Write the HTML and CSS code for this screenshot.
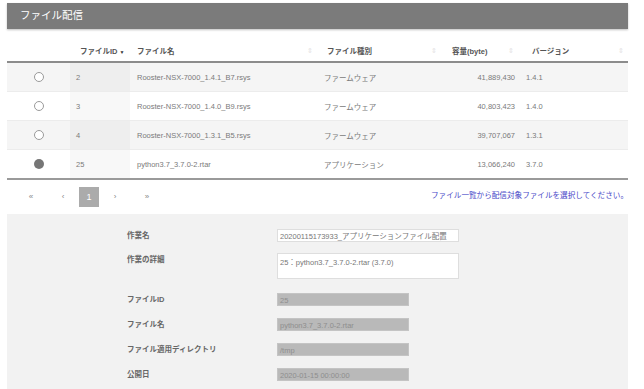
FILE: index.html
```html
<!DOCTYPE html>
<html lang="ja">

<head>
    <meta charset="UTF-8">
    <meta name="viewport" content="width=device-width, initial-scale=1.0">
    <title>ファイル配信</title>
    <link rel="stylesheet" href="styles.css">
</head>

<body>
    <div class="page">
        <div class="title-bar">ファイル配信</div>

        <table class="file-table">
            <colgroup>
                <col class="c-radio">
                <col class="c-id">
                <col class="c-name">
                <col class="c-type">
                <col class="c-size">
                <col class="c-ver">
            </colgroup>
            <thead>
                <tr>
                    <th></th>
                    <th class="th-id"><span>ファイルID</span><span class="sort-down">&#9660;</span></th>
                    <th class="th-name"><div class="th-in">ファイル名<span class="sort">&#8661;</span></div></th>
                    <th class="th-type"><div class="th-in">ファイル種別<span class="sort">&#8661;</span></div></th>
                    <th class="th-size"><div class="th-in">容量(byte)<span class="sort">&#8661;</span></div></th>
                    <th class="th-ver"><div class="th-in">バージョン<span class="sort">&#8661;</span></div></th>
                </tr>
            </thead>
            <tbody>
                <tr class="odd">
                    <td class="td-radio"><span class="radio"></span></td>
                    <td class="td-id">2</td>
                    <td class="td-name">Rooster-NSX-7000_1.4.1_B7.rsys</td>
                    <td class="td-type">ファームウェア</td>
                    <td class="td-size">41,889,430</td>
                    <td class="td-ver">1.4.1</td>
                </tr>
                <tr>
                    <td class="td-radio"><span class="radio"></span></td>
                    <td class="td-id">3</td>
                    <td class="td-name">Rooster-NSX-7000_1.4.0_B9.rsys</td>
                    <td class="td-type">ファームウェア</td>
                    <td class="td-size">40,803,423</td>
                    <td class="td-ver">1.4.0</td>
                </tr>
                <tr class="odd">
                    <td class="td-radio"><span class="radio"></span></td>
                    <td class="td-id">4</td>
                    <td class="td-name">Rooster-NSX-7000_1.3.1_B5.rsys</td>
                    <td class="td-type">ファームウェア</td>
                    <td class="td-size">39,707,067</td>
                    <td class="td-ver">1.3.1</td>
                </tr>
                <tr>
                    <td class="td-radio"><span class="radio checked"></span></td>
                    <td class="td-id">25</td>
                    <td class="td-name">python3.7_3.7.0-2.rtar</td>
                    <td class="td-type">アプリケーション</td>
                    <td class="td-size">13,066,240</td>
                    <td class="td-ver">3.7.0</td>
                </tr>
            </tbody>
        </table>

        <div class="pager-row">
            <div class="pager">
                <span class="pg edge">&laquo;</span>
                <span class="pg">&lsaquo;</span>
                <span class="pg current">1</span>
                <span class="pg">&rsaquo;</span>
                <span class="pg edge">&raquo;</span>
            </div>
            <div class="note">ファイル一覧から配信対象ファイルを選択してください。</div>
        </div>

        <div class="form-panel">
            <div class="form-grid">
                <div class="label">作業名</div>
                <div class="input">20200115173933_アプリケーションファイル配置</div>

                <div class="label">作業の詳細</div>
                <div class="input textarea">25：python3.7_3.7.0-2.rtar (3.7.0)</div>

                <div class="label">ファイルID</div>
                <div class="input readonly">25</div>

                <div class="label">ファイル名</div>
                <div class="input readonly">python3.7_3.7.0-2.rtar</div>

                <div class="label">ファイル適用ディレクトリ</div>
                <div class="input readonly">/tmp</div>

                <div class="label">公開日</div>
                <div class="input readonly">2020-01-15 00:00:00</div>
            </div>
        </div>
    </div>
</body>

</html>
```

FILE: styles.css
```css
body {
    margin: 0;
    font-family: "Liberation Sans", "Noto Sans CJK JP", sans-serif;
    font-size: 7.5px;
    color: #7a7a7a;
    background-color: #fff;
}

.page {
    width: 621px;
    margin: 3px 0 0 7px;
}

.title-bar {
    height: 26px;
    line-height: 25px;
    padding-left: 13px;
    background-color: #7b7b7b;
    color: #fff;
    font-size: 10.5px;
    box-shadow: 0 1px 2px rgba(0, 0, 0, 0.25);
}

/* table */

.file-table {
    width: 621px;
    margin-top: 11px;
    border-collapse: collapse;
    table-layout: fixed;
}

.c-radio { width: 63px; }
.c-id { width: 60px; }
.c-name { width: 190px; }
.c-type { width: 125px; }
.c-size { width: 75px; }
.c-ver { width: 108px; }

.file-table th {
    height: 21px;
    padding: 0;
    text-align: left;
    font-weight: bold;
    color: #555;
    border-bottom: 2px solid #8c8c8c;
}

.th-in {
    display: flex;
    justify-content: space-between;
    align-items: center;
}

.sort {
    color: #e2e2e2;
    font-weight: normal;
    font-size: 7px;
}

.sort-down {
    display: inline-block;
    margin-left: 2px;
    font-size: 5px;
    color: #333;
    vertical-align: 0;
}

.th-id { padding-left: 10px !important; }
.th-name { padding: 0 7px !important; }
.th-type { padding: 0 8px 0 7px !important; }
.th-size { padding: 0 6px 0 7px !important; }
.th-ver { padding: 0 4px 0 12px !important; }

.file-table td {
    height: 28px;
    padding: 0;
    border-top: 1px solid #ececec;
    white-space: nowrap;
}

.file-table tbody tr:first-child td {
    border-top: none;
}

.file-table tbody tr:last-child td {
    border-bottom: 2px solid #9a9a9a;
}

.file-table tr.odd td {
    background-color: #f5f5f5;
}

.file-table td.td-id {
    background-color: #f8f8f8;
    padding-left: 6px;
}

.file-table tr.odd td.td-id {
    background-color: #eeeeee;
}

.td-radio {
    text-align: center;
}

.radio {
    display: inline-block;
    width: 8px;
    height: 8px;
    border: 1px solid #9a9a9a;
    border-radius: 50%;
    background-color: #fff;
    vertical-align: middle;
}

.radio.checked {
    width: 10px;
    height: 10px;
    border: none;
    background-color: #767676;
}

.td-name { padding-left: 7px !important; }
.td-type { padding-left: 4px !important; }
.td-size { text-align: right; padding-right: 5px !important; }
.td-ver { padding-left: 6px !important; }

/* pager */

.pager-row {
    height: 34px;
    display: flex;
    justify-content: space-between;
    align-items: center;
}

.pager {
    display: flex;
    align-items: center;
    padding-left: 14px;
}

.pg {
    width: 20px;
    height: 20px;
    line-height: 20px;
    text-align: center;
    margin: 0 3px;
    color: #888;
    font-size: 8px;
}

.pg.edge {
    margin: 0 9px 0 0;
}

.pg.edge:last-child {
    margin: 0 0 0 9px;
}

.pg.current {
    background-color: #ababab;
    color: #fff;
    font-size: 9px;
}

.note {
    color: #4848c8;
    font-size: 7.6px;
    margin-top: -6px;
}

/* form */

.form-panel {
    background-color: #f2f2f2;
    padding: 15px 0 20px 120px;
}

.form-grid {
    display: grid;
    grid-template-columns: 150px 182px;
    row-gap: 11px;
    align-items: start;
}

.label {
    font-weight: bold;
    color: #666;
    line-height: 13px;
}

.input {
    height: 13px;
    line-height: 13px;
    padding-left: 2px;
    background-color: #fff;
    border: 1px solid #dedede;
    box-sizing: border-box;
    color: #777;
    white-space: nowrap;
    overflow: hidden;
}

.input.textarea {
    height: 26px;
    padding-top: 2px;
    margin-bottom: 3px;
}

.input.readonly {
    width: 132px;
    background-color: #b9b9b9;
    border-color: #c4c4c4;
    color: #8e8e8e;
    margin-bottom: 1px;
}
```
